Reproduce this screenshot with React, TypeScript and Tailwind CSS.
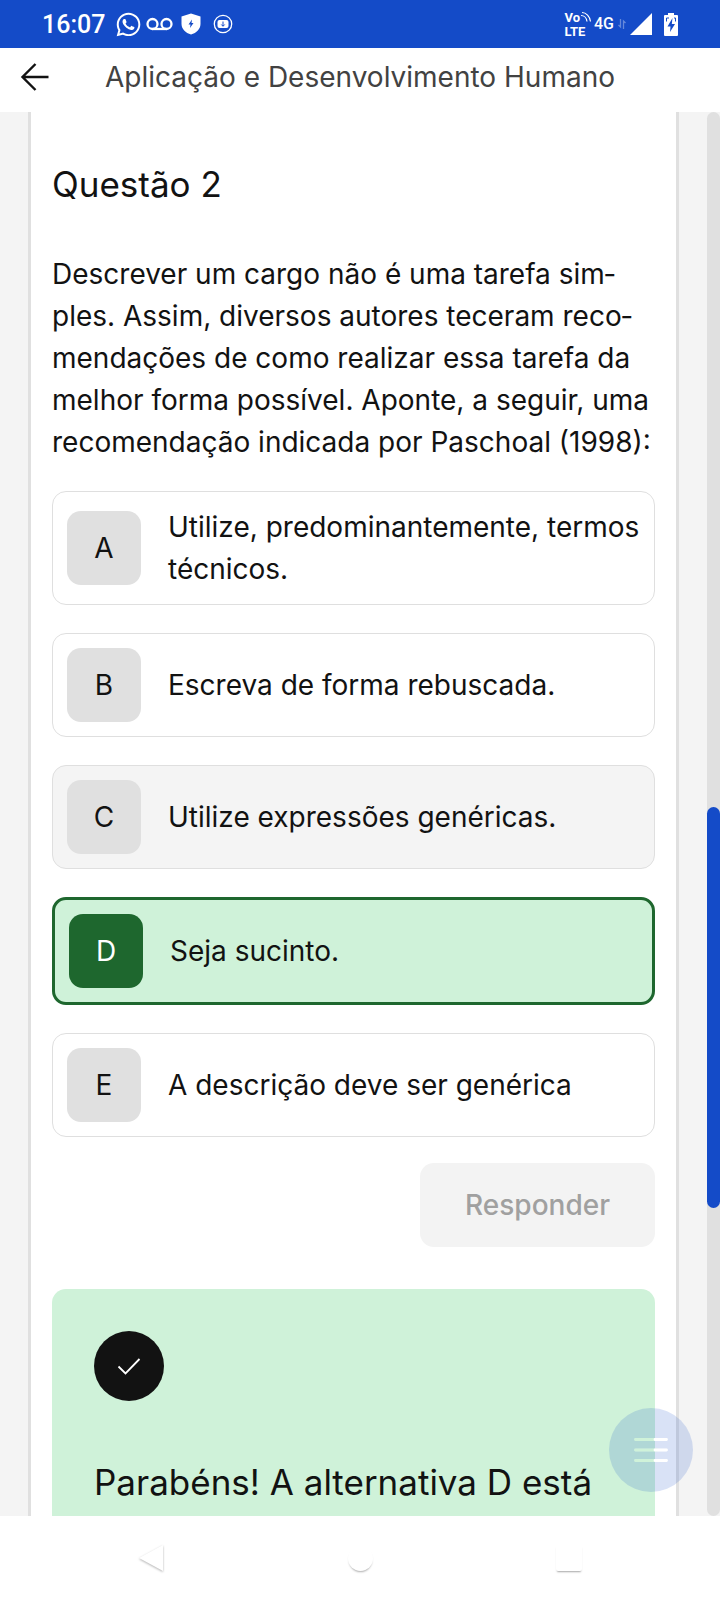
import { FaWhatsapp } from "react-icons/fa";

type Option = { letter: string; text: string; state?: "rejected" | "correct" };

const options: Option[] = [
  { letter: "A", text: "Utilize, predominantemente, termos técnicos." },
  { letter: "B", text: "Escreva de forma rebuscada." },
  { letter: "C", text: "Utilize expressões genéricas.", state: "rejected" },
  { letter: "D", text: "Seja sucinto.", state: "correct" },
  { letter: "E", text: "A descrição deve ser genérica" },
];

function StatusBar() {
  return (
    <div className="flex h-12 shrink-0 items-center justify-between bg-[#144bc8] pr-[42px] pl-[42px] font-[Roboto,sans-serif] text-white">
      <div className="flex items-center">
        <span className="pt-0.5 text-[25px] leading-8 font-medium">16:07</span>
        <FaWhatsapp className="ml-2.5 size-[27px]" aria-hidden="true" />
        <svg className="ml-1 h-3.5 w-[27px]" viewBox="0 0 27 14" fill="none" stroke="currentColor" strokeWidth="2.3" aria-hidden="true">
          <circle cx="6.5" cy="7" r="5" />
          <circle cx="20.5" cy="7" r="5" />
          <path d="M6.5 12h14" />
        </svg>
        <svg className="ml-2 h-[22px] w-5" viewBox="0 0 20 22" aria-hidden="true">
          <path d="M10 0.5 19.5 3.5V11c0 5-4 9-9.5 10.500C4.500 20 .5 16 .5 11V3.500Z" fill="#fff" />
          <path d="M11 6.500 7.500 11.500h2L9 15l3.500-5h-2Z" fill="#144bc8" />
        </svg>
        <svg className="ml-3 size-5" viewBox="0 0 20 20" fill="none" aria-hidden="true">
          <circle cx="10" cy="10" r="8.700" stroke="#fff" strokeWidth="1.300" />
          <rect x="4.500" y="6" width="11" height="8" rx="2" fill="#fff" />
          <path d="M10 7.500v4.500M8.300 10.500 10 12.300l1.700-1.800" stroke="#144bc8" strokeWidth="1" />
        </svg>
      </div>
      <div className="flex items-center">
        <div className="flex flex-col pt-0.5 text-[13px] leading-[14px] font-bold">
          <span className="flex items-start">
            Vo
            <svg className="h-3 w-3" viewBox="0 0 12 12" fill="none" stroke="currentColor" strokeWidth="1.200" aria-hidden="true">
              <path d="M2 1.500c4 0 8 4 8.500 9M1 4.500c3 0 5.500 2.500 6 6" />
            </svg>
          </span>
          <span>LTE</span>
        </div>
        <span className="ml-0.5 text-base font-medium">4G</span>
        <svg className="ml-1 h-2.5 w-2" viewBox="0 0 8 10" fill="none" stroke="#fff" strokeOpacity="0.350" strokeWidth="1.300" aria-hidden="true">
          <path d="M2.500 0v8L.5 6M5.500 10V2l2 2" />
        </svg>
        <svg className="ml-1 h-[22px] w-[22px]" viewBox="0 0 22 22" aria-hidden="true">
          <path d="M22 0v22H0Z" fill="#fff" />
        </svg>
        <svg className="ml-3 h-[23px] w-3.5" viewBox="0 0 14 23" aria-hidden="true">
          <path d="M4 0h6v2h3a1 1 0 0 1 1 1v19a1 1 0 0 1-1 1H1a1 1 0 0 1-1-1V3a1 1 0 0 1 1-1h3Z" fill="#fff" />
          <path d="M8.500 5 3.500 13.500h3L6 19l5-8H7.800Z" fill="#144bc8" />
          <path d="M2.500 8.500V5H5M11.500 8.500V5H10" stroke="#144bc8" strokeWidth="1" fill="none" />
        </svg>
      </div>
    </div>
  );
}

function OptionCard({ letter, text, state }: Option) {
  const card =
    state === "correct"
      ? "border-[3px] border-[#1e672e] bg-[#cff2d9]"
      : state === "rejected"
        ? "border border-[#dfdfdf] bg-[#f4f4f4]"
        : "border border-[#dfdfdf] bg-white";
  const badge = state === "correct" ? "bg-[#1e672e] text-white" : "bg-[#e0e0e0]";
  return (
    <button type="button" className={`flex w-full items-center gap-[27px] rounded-[14px] py-3.5 pr-2 pl-3.5 text-left ${card}`}>
      <span className={`flex size-[74px] shrink-0 items-center justify-center rounded-[14px] ${badge}`}>{letter}</span>
      <span className="flex-1">{text}</span>
    </button>
  );
}

export default function App() {
  return (
    <div className="flex h-dvh flex-col bg-white font-[Inter,sans-serif] text-[28px] leading-[42px] text-[#121212]">
      <StatusBar />
      <header className="relative flex h-16 shrink-0 items-center justify-center pb-1.5">
        <button type="button" aria-label="Voltar" className="absolute left-5 flex size-8 items-center justify-center">
          <svg className="size-8" viewBox="0 0 32 32" fill="none" stroke="currentColor" strokeWidth="2.4" aria-hidden="true">
            <path d="M28.500 16H3M15.500 3 2.500 16l13 13" />
          </svg>
        </button>
        <h1 className="text-[#424242]">Aplicação e Desenvolvimento Humano</h1>
      </header>

      <div className="relative flex min-h-0 flex-1 bg-[#f4f4f4]">
        <main className="flex min-w-0 flex-1 overflow-hidden px-7">
          <section className="flex min-w-0 flex-1 flex-col border-x-[3px] border-[#e0e0e0] bg-white px-[21px]">
            <h2 className="mt-[46px] text-[35px] leading-[52px]">Questão 2</h2>
            <p className="mt-[43px]">
              Descrever um cargo não é uma tarefa sim&shy;ples. Assim, diversos autores teceram reco&shy;mendações de
              como realizar essa tarefa da melhor forma possível. Aponte, a seguir, uma recomendação indicada por
              Paschoal (1998):
            </p>
            <div className="mt-7 flex flex-col gap-7">
              {options.map((option) => (
                <OptionCard key={option.letter} {...option} />
              ))}
            </div>
            <button
              type="button"
              disabled
              className="mt-[26px] self-end rounded-[14px] bg-[#f3f3f3] px-[45px] py-[21px] font-medium text-[#a0a0a0]"
            >
              Responder
            </button>
            <div className="mt-[42px] flex-1 rounded-t-[14px] bg-[#cff2d9] px-[42px] pt-[42px]">
              <div className="flex size-[70px] items-center justify-center rounded-full bg-[#121212]">
                <svg className="size-7" viewBox="0 0 28 28" fill="none" stroke="#fff" strokeWidth="1.800" aria-hidden="true">
                  <path d="m3.500 14.500 7 7L24.500 7" />
                </svg>
              </div>
              <p className="mt-[55px] text-[35px] leading-[52px]">Parabéns! A alternativa D está</p>
            </div>
          </section>
        </main>

        <div className="flex w-[13px] shrink-0 flex-col rounded-full bg-[#e0e0e0]" aria-hidden="true">
          <div className="flex-[695]" />
          <div className="flex-[401] rounded-full bg-[#144bc8]" />
          <div className="flex-[308]" />
        </div>

        <button
          type="button"
          aria-label="Menu"
          className="absolute right-[27px] bottom-6 flex size-[84px] flex-col items-center justify-center rounded-full"
        >
          <svg className="size-[84px]" viewBox="0 0 84 84" aria-hidden="true">
            <circle cx="42" cy="42" r="42" fill="#144bc8" fillOpacity="0.160" />
            <path d="M26.500 31.500h31M26.500 42h31M26.500 52.500h31" stroke="#fff" strokeWidth="2.800" strokeLinecap="round" strokeOpacity="0.200" />
            <path d="M26.500 31.500h21M26.500 42h21M26.500 52.500h21" stroke="#cff2d9" strokeWidth="2.800" strokeLinecap="round" />
            <path d="M46 31.500h11.500M46 42h11.500M46 52.500h11.500" stroke="#fff" strokeWidth="2.800" strokeLinecap="round" />
          </svg>
        </button>
      </div>

      <nav className="flex h-[84px] shrink-0 items-center justify-between px-[135px]">
        <button type="button" aria-label="Voltar no sistema" className="flex size-8 items-center justify-center">
          <svg className="h-8 w-7 drop-shadow-[0_1px_1px_rgba(0,0,0,0.3)]" viewBox="0 0 28 32" aria-hidden="true">
            <path d="M26 3v26L2 16Z" fill="#fff" />
          </svg>
        </button>
        <button type="button" aria-label="Início" className="flex size-8 items-center justify-center">
          <span className="size-[25px] rounded-full bg-white shadow-[0_2px_2px_-1px_rgba(0,0,0,0.3)]" />
        </button>
        <button type="button" aria-label="Recentes" className="flex size-8 items-center justify-center">
          <span className="size-[26px] rounded-xs bg-white shadow-[0_2px_2px_-1px_rgba(0,0,0,0.35)]" />
        </button>
      </nav>
    </div>
  );
}
